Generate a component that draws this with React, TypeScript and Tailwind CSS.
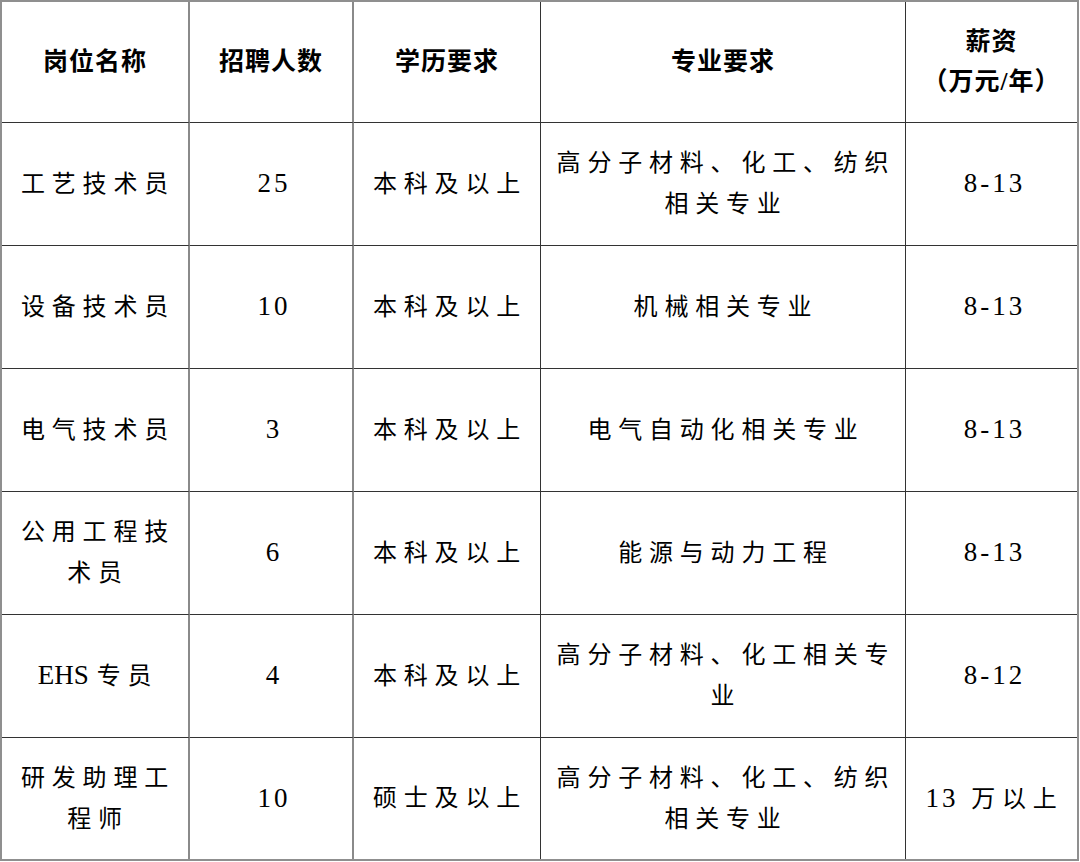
const HEAD = ["岗位名称", "招聘人数", "学历要求", "专业要求", "薪资"];

type Row = [string, string, string, string, string];

const ROWS: Row[] = [
  ["工艺技术员", "25", "本科及以上", "高分子材料、化工、纺织相关专业", "8-13"],
  ["设备技术员", "10", "本科及以上", "机械相关专业", "8-13"],
  ["电气技术员", "3", "本科及以上", "电气自动化相关专业", "8-13"],
  ["公用工程技术员", "6", "本科及以上", "能源与动力工程", "8-13"],
  ["EHS 专员", "4", "本科及以上", "高分子材料、化工相关专业", "8-12"],
  ["研发助理工程师", "10", "硕士及以上", "高分子材料、化工、纺织相关专业", "13 万以上"],
];

// latin runs (digits, EHS) are set a bit larger in a serif face
function Mixed({ text }: { text: string }) {
  const parts = text.split(/([A-Za-z0-9\-]+)/).filter(Boolean);
  return (
    <>
      {parts.map((p, i) =>
        /^[A-Za-z0-9\-]+$/.test(p) ? (
          <span
            key={i}
            className={`font-[family-name:Liberation_Serif,serif] font-normal text-[27px] ${
              /[A-Z]/.test(p) ? "tracking-[0px] mr-[8px]" : "tracking-[3px]"
            }`}
          >
            {p}
          </span>
        ) : (
          <span key={i}>{/[A-Z]/.test(text) ? p.trim() : p}</span>
        )
      )}
    </>
  );
}

const VLINE = [
  "border-r-2 border-r-[#8a8a8a]",
  "border-r-2 border-r-[#8a8a8a]",
  "border-r border-r-[#333]",
  "border-r border-r-[#333]",
  "",
];

export default function App() {
  return (
    <div className="bg-white w-[1080px] h-[862px]">
      <div className="w-[1079px] h-[861px] border-2 border-[#8f8f8f] grid grid-cols-[188px_164px_187px_365px_1fr] grid-rows-[121px_123px_123px_123px_123px_123px_1fr] text-black font-[family-name:Liberation_Serif,Noto_Sans_CJK_SC,serif]">
        {HEAD.map((h, c) => (
          <div
            key={h}
            className={`flex flex-col items-center justify-center text-center font-bold text-[25px] tracking-[1px] leading-[40px] border-b border-b-[#333] ${VLINE[c]}`}
          >
            <span>{h}</span>
            {c === 4 && <span>（万元/年）</span>}
          </div>
        ))}
        {ROWS.map((row, r) =>
          row.map((cell, c) => (
            <div
              key={`${r}-${c}`}
              className={`flex items-center justify-center text-center px-[8px] text-[24px] tracking-[6.8px] leading-[41px] ${VLINE[c]} ${
                r < ROWS.length - 1 ? "border-b border-b-[#333]" : ""
              }`}
            >
              <p className="pl-[6px]">
                <Mixed text={cell} />
              </p>
            </div>
          ))
        )}
      </div>
    </div>
  );
}
